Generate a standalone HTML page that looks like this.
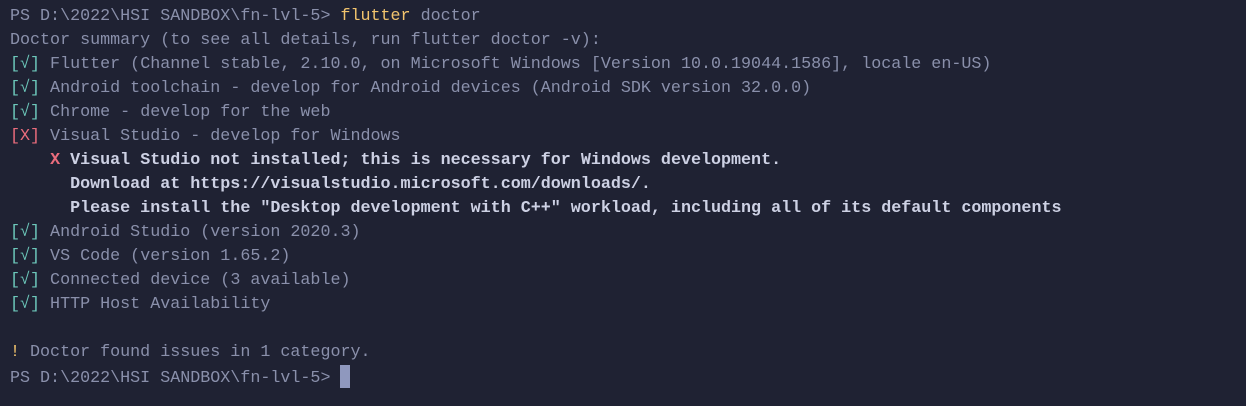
<!DOCTYPE html>
<html><head><meta charset="utf-8"><style>
html,body{margin:0;padding:0;background:#1f2233;width:1246px;height:406px;overflow:hidden}
pre{margin:0;position:absolute;left:10px;top:5px;font-family:"Liberation Mono","DejaVu Sans Mono",monospace;font-size:16.7px;line-height:24px;color:#8a90ab;white-space:pre}
.c{color:#6cc7ba}.r{color:#ea6c7c}.y{color:#f2c46d}.b{color:#cdd1e4;font-weight:bold}
.cur{display:inline-block;width:10px;height:23px;background:#8f98be;vertical-align:-6px}
</style></head><body><pre>PS D:\2022\HSI SANDBOX\fn-lvl-5> <span class="y">flutter</span> doctor
Doctor summary (to see all details, run flutter doctor -v):
<span class="c">[√]</span> Flutter (Channel stable, 2.10.0, on Microsoft Windows [Version 10.0.19044.1586], locale en-US)
<span class="c">[√]</span> Android toolchain - develop for Android devices (Android SDK version 32.0.0)
<span class="c">[√]</span> Chrome - develop for the web
<span class="r">[X]</span> Visual Studio - develop for Windows
    <span class="r b" style="color:#ea6c7c">X</span><span class="b"> Visual Studio not installed; this is necessary for Windows development.</span>
<span class="b">      Download at https://visualstudio.microsoft.com/downloads/.</span>
<span class="b">      Please install the "Desktop development with C++" workload, including all of its default components</span>
<span class="c">[√]</span> Android Studio (version 2020.3)
<span class="c">[√]</span> VS Code (version 1.65.2)
<span class="c">[√]</span> Connected device (3 available)
<span class="c">[√]</span> HTTP Host Availability

<span class="y">!</span> Doctor found issues in 1 category.
PS D:\2022\HSI SANDBOX\fn-lvl-5> <span class="cur"></span></pre></body></html>
